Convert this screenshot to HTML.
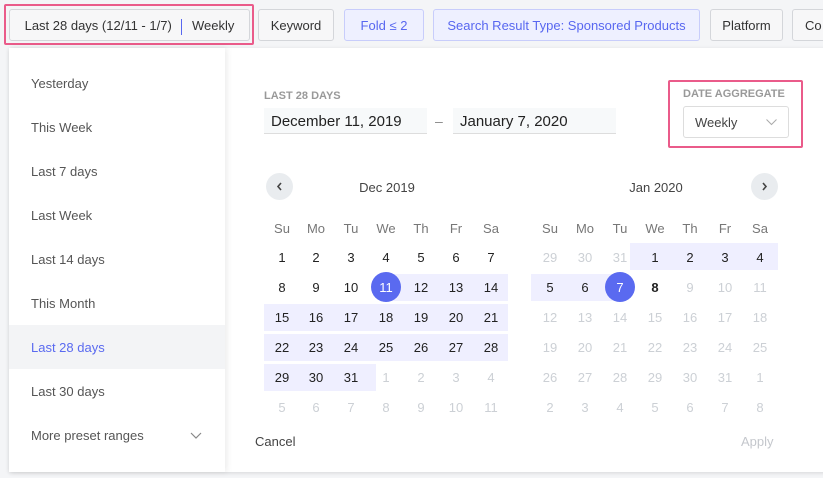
<!DOCTYPE html>
<html><head><style>
*{box-sizing:border-box;margin:0;padding:0}
body{width:823px;height:478px;background:#f4f5f7;font-family:"Liberation Sans",sans-serif;position:relative;overflow:hidden;color:#333}
.a{position:absolute}
.btn{position:absolute;top:9px;height:32px;border:1px solid #d4d6da;border-radius:3px;background:#f7f7f8;font-size:13px;line-height:31px;color:#333;text-align:center}
.blue{background:#eef0ff;border-color:#c8cdfb;color:#5867f0}
.side div{position:absolute;left:0;width:216px;height:44px;line-height:46px;padding-left:22px;font-size:13px;color:#555}
.d{position:absolute;width:30px;text-align:center;font-size:13px;line-height:16px;color:#222}
.w{color:#777}
.g{color:#ccd0d5}
.band{position:absolute;background:#efefff;height:27px}
.circ{position:absolute;width:30px;height:30px;border-radius:50%;background:#5a6af0}
</style></head><body>
<div class="a" style="left:4px;top:4px;width:250px;height:41px;border:2px solid #ea5b8a;border-radius:2px"></div>
<div class="btn" style="left:9px;width:241px">Last 28 days (12/11 - 1/7) <span style="display:inline-block;width:1px;height:16px;background:#5867f0;vertical-align:middle;margin:0 6px"></span> Weekly</div>
<div class="btn" style="left:258px;width:76px">Keyword</div>
<div class="btn blue" style="left:344px;width:80px">Fold ≤ 2</div>
<div class="btn blue" style="left:433px;width:267px">Search Result Type: Sponsored Products</div>
<div class="btn" style="left:710px;width:73px">Platform</div>
<div class="btn" style="left:792px;width:60px;text-align:left;padding-left:12px">Co</div>

<div class="a" style="left:9px;top:48px;width:830px;height:424px;background:#fff;box-shadow:0 1px 4px rgba(0,0,0,.12)"></div>
<div class="a side" style="left:9px;top:48px;width:216px;height:424px;box-shadow:2px 0 6px rgba(0,0,0,.08)">
<div style="top:13px">Yesterday</div>
<div style="top:57px">This Week</div>
<div style="top:101px">Last 7 days</div>
<div style="top:145px">Last Week</div>
<div style="top:189px">Last 14 days</div>
<div style="top:233px">This Month</div>
<div style="top:277px;background:#f3f4f6;color:#5a6af0">Last 28 days</div>
<div style="top:321px">Last 30 days</div>
<div style="top:365px">More preset ranges<svg style="position:absolute;left:181px;top:19px" width="12" height="8"><path d="M1 1l5 5 5-5" fill="none" stroke="#888" stroke-width="1.2"/></svg></div>
</div>

<div class="a" style="left:264px;top:90px;font-size:11px;color:#999;font-weight:bold">LAST 28 DAYS</div>
<div class="a" style="left:264px;top:108px;width:163px;height:26px;background:#f7f9fa;border-bottom:1px solid #ddd;font-size:15px;line-height:28px;padding-left:7px;color:#222">December 11, 2019</div>
<div class="a" style="left:435px;top:113px;font-size:14px;color:#888">–</div>
<div class="a" style="left:453px;top:108px;width:163px;height:26px;background:#f7f9fa;border-bottom:1px solid #ddd;font-size:15px;line-height:28px;padding-left:7px;color:#222">January 7, 2020</div>
<div class="a" style="left:668px;top:80px;width:135px;height:68px;border:2px solid #ea5b8a;border-radius:2px"></div>
<div class="a" style="left:683px;top:88px;font-size:11px;color:#999;font-weight:bold">DATE AGGREGATE</div>
<div class="a" style="left:683px;top:106px;width:106px;height:32px;border:1px solid #ddd;border-radius:3px;font-size:13px;line-height:31px;padding-left:11px;color:#444">Weekly<svg style="position:absolute;left:82px;top:12px" width="11" height="7"><path d="M.5 .5l5 5 5-5" fill="none" stroke="#aaa"/></svg></div>

<div class="a" style="left:266px;top:173px;width:27px;height:27px;border-radius:50%;background:#e9ecef"><svg width="27" height="27"><path d="M15 10l-3 3.5 3 3.5" fill="none" stroke="#444" stroke-width="1.6"/></svg></div>
<div class="a" style="left:751px;top:173px;width:27px;height:27px;border-radius:50%;background:#e9ecef"><svg width="27" height="27"><path d="M12 10l3 3.5-3 3.5" fill="none" stroke="#444" stroke-width="1.6"/></svg></div>
<div class="a" style="left:337px;top:180px;width:100px;text-align:center;font-size:13px;color:#444">Dec 2019</div>
<div class="a" style="left:606px;top:180px;width:100px;text-align:center;font-size:13px;color:#444">Jan 2020</div>

<div class="band" style="left:386px;top:274px;width:122px"></div>
<div class="band" style="left:264px;top:304px;width:244px"></div>
<div class="band" style="left:264px;top:334px;width:244px"></div>
<div class="band" style="left:264px;top:364px;width:112px"></div>
<div class="band" style="left:630px;top:243px;width:148px"></div>
<div class="band" style="left:531px;top:274px;width:89px"></div>
<div class="circ" style="left:371px;top:272px"></div>
<div class="circ" style="left:605px;top:272px"></div>
<div id="cal"></div>
<script>
var c=document.getElementById('cal'),h='';
var wd=['Su','Mo','Tu','We','Th','Fr','Sa'];
function put(x,y,t,cls,st){h+='<div class="d '+cls+'" style="left:'+(x-15)+'px;top:'+(y-7)+'px;'+(st||'')+'">'+t+'</div>';}
var dx=[282,316,351,386,421,456,491],jx=[550,585,620,655,690,725,760],ry=[257,287,317,347,377,407];
for(var i=0;i<7;i++){put(dx[i],228,wd[i],'w');put(jx[i],228,wd[i],'w');}
for(var r=0;r<6;r++)for(var i=0;i<7;i++){
 var n=r*7+i+1,t,cl='';
 if(n<=31)t=n;else{t=n-31;cl='g';}
 var st=(n==11)?'color:#fff':'';put(dx[i],ry[r],t,cl,st);
 var m=r*7+i-2;var jt,jc='g';
 if(m<1)jt=[29,30,31][i];else if(m<=31){jt=m;if(m<=8)jc='';}else jt=m-31;
 var js=(m==7)?'color:#fff':(m==8?'font-weight:bold':'');
 put(jx[i],ry[r],jt,jc,js);
}
c.innerHTML=h;
</script>
<div class="a" style="left:255px;top:434px;font-size:13px;color:#444">Cancel</div>
<div class="a" style="left:741px;top:434px;font-size:13px;color:#c4c7cc">Apply</div>
</body></html>
